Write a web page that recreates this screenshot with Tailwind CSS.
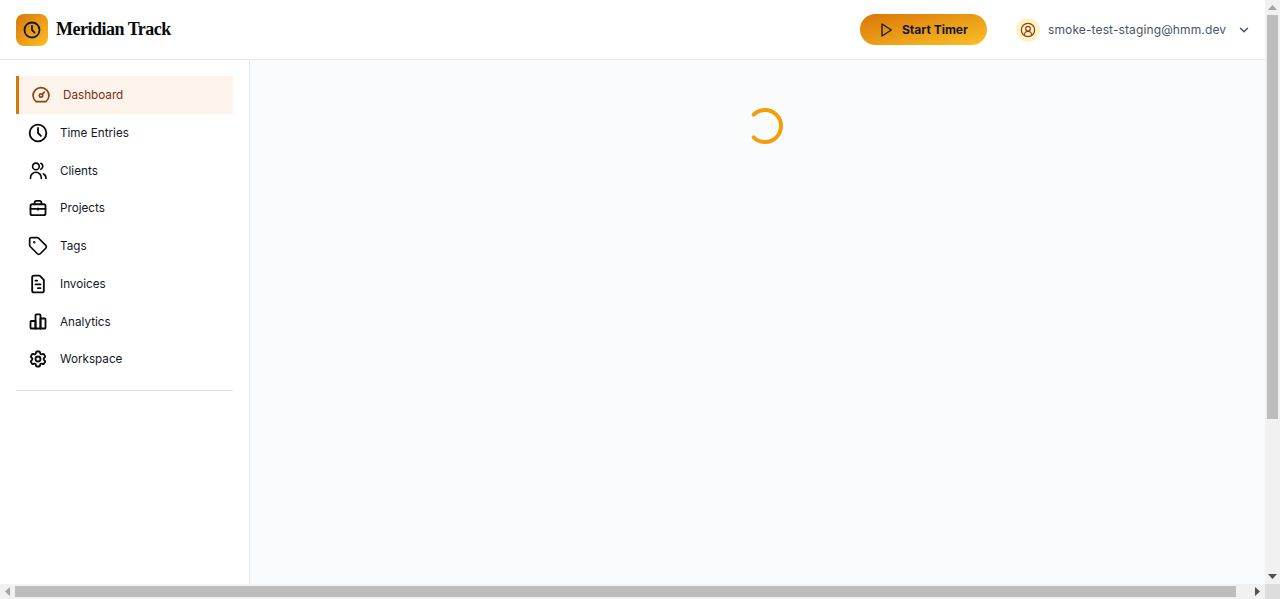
<!DOCTYPE html>
<html lang="en">

<head>
  <meta charset="UTF-8" />
  <meta name="viewport" content="width=device-width, initial-scale=1.0" />
  <title>Meridian Track</title>
  <script src="https://cdn.jsdelivr.net/npm/@tailwindcss/browser@4"></script>
</head>

<body class="font-['Inter',sans-serif] h-screen overflow-hidden flex flex-col">
  <div class="flex flex-1 min-h-0">
    <div class="flex-1 min-w-0 overflow-hidden">
      <div class="w-[1280px] h-full flex flex-col bg-white">
        <header class="h-[60px] shrink-0 bg-white border-b border-[#e5e7eb] flex items-center justify-between pl-4 pr-[29px]">
          <div class="flex items-center gap-2">
            <div class="w-8 h-8 rounded-lg bg-gradient-to-br from-[#d97706] to-[#fbbf24] flex items-center justify-center">
              <svg class="w-[18px] h-[18px]" viewBox="0 0 24 24" fill="none" stroke="#111827" stroke-width="2.4" stroke-linecap="round" stroke-linejoin="round">
                <circle cx="12" cy="12" r="10" />
                <path d="M12 6.5V12l3.5 3.5" />
              </svg>
            </div>
            <span class="font-['Liberation_Serif',serif] font-bold text-[18px] tracking-[-0.5px] text-[#0a0a0a]">Meridian Track</span>
          </div>
          <div class="flex items-center">
            <button class="w-[127px] h-[31px] rounded-full bg-gradient-to-br from-[#d97706] to-[#fbbf24] flex items-center pl-[18px] gap-2 text-[#111827] text-[12px] font-bold">
              <svg class="w-4 h-4" viewBox="0 0 24 24" fill="none" stroke="#111827" stroke-width="2" stroke-linecap="round" stroke-linejoin="round">
                <path d="M6 3l14 9-14 9V3z" />
              </svg>
              Start Timer
            </button>
            <div class="ml-[29px] w-6 h-6 rounded-full bg-[#fef3c7] flex items-center justify-center">
              <svg class="w-4 h-4" viewBox="0 0 24 24" fill="none" stroke="#92400e" stroke-width="1.8" stroke-linecap="round" stroke-linejoin="round">
                <circle cx="12" cy="12" r="10" />
                <circle cx="12" cy="10" r="3.5" />
                <path d="M6.5 19.5a5.5 5.5 0 0 1 11 0" />
              </svg>
            </div>
            <span class="ml-2 w-[178px] text-[12px] tracking-[0.12px] text-[#475569] whitespace-nowrap">smoke-test-staging@hmm.dev</span>
            <svg class="ml-[11px] w-[14px] h-[14px]" viewBox="0 0 24 24" fill="none" stroke="#475569" stroke-width="2.5" stroke-linecap="round" stroke-linejoin="round">
              <path d="M6 9l6 6 6-6" />
            </svg>
          </div>
        </header>
        <div class="flex flex-1 min-h-0">
          <aside class="w-[250px] shrink-0 border-r border-[#e5e7eb] bg-white p-4">
            <nav class="flex flex-col text-[11.7px] text-[#111827]">
              <a class="h-[38px] flex items-center gap-3 pl-3 bg-[#fcf3ea] border-l-[3px] border-[#d97706] text-[#7c2d12]">
                <svg class="w-5 h-5" viewBox="0 0 24 24" fill="none" stroke="#92400e" stroke-width="2" stroke-linecap="round" stroke-linejoin="round">
                  <path d="M6 20h12a9.5 9.5 0 1 0-12 0z" />
                  <circle cx="12" cy="12.5" r="2" />
                  <path d="M13.5 11l2.5-2.5" />
                </svg>
                <span class="pt-0.5">Dashboard</span>
              </a>
              <a class="h-[37.7px] flex items-center gap-3 pl-3">
                <svg class="w-5 h-5" viewBox="0 0 24 24" fill="none" stroke="#0a0a0a" stroke-width="2.2" stroke-linecap="round" stroke-linejoin="round">
                  <circle cx="12" cy="12" r="10" />
                  <path d="M12 6v6l3.5 3.5" />
                </svg>
                <span class="pt-0.5">Time Entries</span>
              </a>
              <a class="h-[37.7px] flex items-center gap-3 pl-3">
                <svg class="w-5 h-5" viewBox="0 0 24 24" fill="none" stroke="#0a0a0a" stroke-width="2" stroke-linecap="round" stroke-linejoin="round">
                  <circle cx="9.5" cy="6.5" r="4" />
                  <path d="M3 21v-1a6.5 6.5 0 0 1 13 0v1" />
                  <path d="M21.5 21v-1a5 5 0 0 0-3-4.5" />
                  <path d="M15.5 2.8a4 4 0 0 1 0 7.2" />
                </svg>
                <span class="pt-0.5">Clients</span>
              </a>
              <a class="h-[37.7px] flex items-center gap-3 pl-3">
                <svg class="w-5 h-5" viewBox="0 0 24 24" fill="none" stroke="#0a0a0a" stroke-width="2.2" stroke-linecap="round" stroke-linejoin="round">
                  <rect x="3" y="7.5" width="18" height="13" rx="2" />
                  <path d="M8 7.5V5.5a2 2 0 0 1 2-2h4a2 2 0 0 1 2 2v2" />
                  <path d="M3 13h18" />
                  <path d="M12 12.5v1.5" />
                </svg>
                <span class="pt-0.5">Projects</span>
              </a>
              <a class="h-[37.7px] flex items-center gap-3 pl-3">
                <svg class="w-5 h-5" viewBox="0 0 24 24" fill="none" stroke="#0a0a0a" stroke-width="2" stroke-linecap="round" stroke-linejoin="round">
                  <path d="M12.6 2.6A2 2 0 0 0 11.2 2H4a2 2 0 0 0-2 2v7.2a2 2 0 0 0 .6 1.4l8.7 8.7a2.4 2.4 0 0 0 3.4 0l6.6-6.6a2.4 2.4 0 0 0 0-3.4z" />
                  <circle cx="7.5" cy="7.5" r=".5" fill="#0a0a0a" />
                </svg>
                <span class="pt-0.5">Tags</span>
              </a>
              <a class="h-[37.7px] flex items-center gap-3 pl-3">
                <svg class="w-5 h-5" viewBox="0 0 24 24" fill="none" stroke="#0a0a0a" stroke-width="2.2" stroke-linecap="round" stroke-linejoin="round">
                  <path d="M14 2H7a2 2 0 0 0-2 2v16a2 2 0 0 0 2 2h10a2 2 0 0 0 2-2V7z" />
                  <path d="M9 8h2" />
                  <path d="M9 12.5h6" />
                  <path d="M12 17h3" />
                </svg>
                <span class="pt-0.5">Invoices</span>
              </a>
              <a class="h-[37.7px] flex items-center gap-3 pl-3">
                <svg class="w-5 h-5" viewBox="0 0 24 24" fill="none" stroke="#0a0a0a" stroke-width="2.2" stroke-linecap="round" stroke-linejoin="round">
                  <path d="M9 21H4a1 1 0 0 1-1-1v-7a1 1 0 0 1 1-1h5z" />
                  <path d="M9 21V5a1 1 0 0 1 1-1h4a1 1 0 0 1 1 1v16z" />
                  <path d="M15 21h5a1 1 0 0 0 1-1V10a1 1 0 0 0-1-1h-5z" />
                </svg>
                <span class="pt-0.5">Analytics</span>
              </a>
              <a class="h-[37.7px] flex items-center gap-3 pl-3">
                <svg class="w-5 h-5" viewBox="0 0 24 24" fill="none" stroke="#0a0a0a" stroke-width="2.2" stroke-linecap="round" stroke-linejoin="round">
                  <path d="M9.594 3.94c.09-.542.56-.94 1.11-.94h2.593c.55 0 1.02.398 1.11.94l.213 1.281c.063.374.313.686.645.87.074.04.147.083.22.127.325.196.72.257 1.075.124l1.217-.456a1.125 1.125 0 011.37.49l1.296 2.247a1.125 1.125 0 01-.26 1.431l-1.003.827c-.293.241-.438.613-.431.992a6.759 6.759 0 010 .255c-.007.378.138.75.43.99l1.005.828c.424.35.534.954.26 1.43l-1.298 2.247a1.125 1.125 0 01-1.369.491l-1.217-.456c-.355-.133-.75-.072-1.076.124a6.57 6.57 0 01-.22.128c-.331.183-.581.495-.644.869l-.213 1.28c-.09.543-.56.941-1.11.941h-2.594c-.55 0-1.02-.398-1.11-.94l-.213-1.281c-.062-.374-.312-.686-.644-.87a6.52 6.52 0 01-.22-.127c-.325-.196-.72-.257-1.076-.124l-1.217.456a1.125 1.125 0 01-1.369-.49l-1.297-2.247a1.125 1.125 0 01.26-1.431l1.004-.827c.292-.24.437-.613.43-.992a6.932 6.932 0 010-.255c.007-.378-.138-.75-.43-.99l-1.004-.828a1.125 1.125 0 01-.26-1.43l1.297-2.247a1.125 1.125 0 011.37-.491l1.216.456c.356.133.751.072 1.076-.124.072-.044.146-.087.22-.128.332-.183.582-.495.644-.869l.214-1.281z" />
                  <circle cx="12" cy="12" r="3" />
                </svg>
                <span class="pt-0.5">Workspace</span>
              </a>
            </nav>
            <div class="mt-3 border-t border-[#d9dbdf]"></div>
          </aside>
          <main class="flex-1 bg-[#fafbfd] flex justify-center items-start pt-12">
            <svg class="w-9 h-9" viewBox="0 0 36 36" fill="none" stroke="#f59e0b" stroke-width="4" stroke-linecap="round">
              <path d="M6.7 6.7A16 16 0 1 1 6.7 29.3" />
            </svg>
          </main>
        </div>
      </div>
    </div>
    <!-- vertical scrollbar -->
    <div class="w-[15px] shrink-0 bg-[#f1f1f1] flex flex-col items-center">
      <div class="h-[15px] flex items-center justify-center">
        <svg class="w-[9px] h-[5px]" viewBox="0 0 9 5" fill="#a3a3a3"><path d="M4.5 0L9 5H0z" /></svg>
      </div>
      <div class="w-[11px] h-[404px] bg-[#bdbdbd]"></div>
      <div class="flex-1"></div>
      <div class="h-[15px] flex items-center justify-center">
        <svg class="w-[9px] h-[5px]" viewBox="0 0 9 5" fill="#505050"><path d="M0 0h9L4.5 5z" /></svg>
      </div>
    </div>
  </div>
  <!-- horizontal scrollbar -->
  <div class="h-[15px] shrink-0 flex">
    <div class="flex-1 bg-[#f1f1f1] flex items-center">
      <div class="w-[15px] flex items-center justify-center">
        <svg class="w-[5px] h-[9px]" viewBox="0 0 5 9" fill="#a3a3a3"><path d="M5 0v9L0 4.5z" /></svg>
      </div>
      <div class="w-[1221px] h-[11px] bg-[#bdbdbd]"></div>
      <div class="flex-1"></div>
      <div class="w-[15px] flex items-center justify-center">
        <svg class="w-[5px] h-[9px]" viewBox="0 0 5 9" fill="#505050"><path d="M0 0v9l5-4.5z" /></svg>
      </div>
    </div>
    <div class="w-[15px] bg-[#dcdcdc]"></div>
  </div>
</body>

</html>
